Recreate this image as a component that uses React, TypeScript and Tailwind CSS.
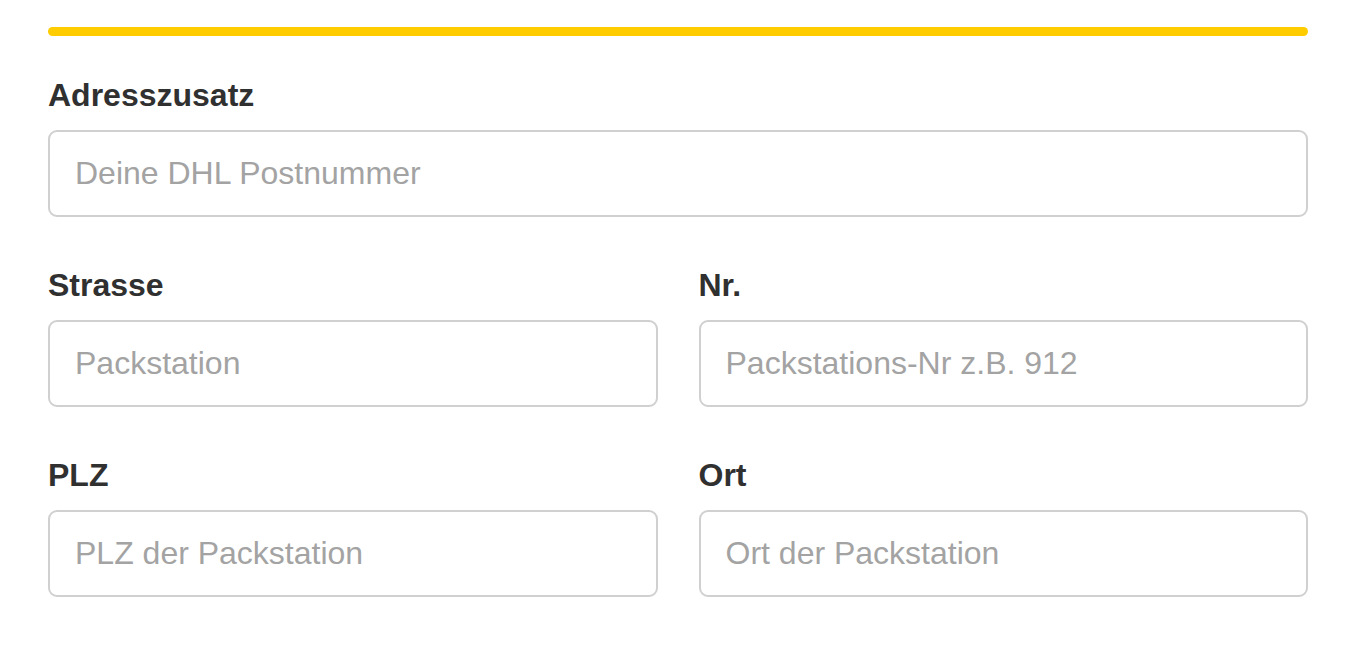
import React from "react";

const font = { fontFamily: '"Liberation Sans", Arial, sans-serif' };

function Field({ label, placeholder }: { label: string; placeholder: string }) {
  return (
    <div className="flex flex-col">
      <label className="text-[32px] leading-[37px] font-bold text-[#303030] mb-[16px]">
        {label}
      </label>
      <input
        type="text"
        placeholder={placeholder}
        className="h-[87px] w-full rounded-[9px] border-2 border-[#d0d0d0] bg-white px-[25px] text-[32px] text-[#333] placeholder:text-[#a3a3a3] outline-none"
      />
    </div>
  );
}

export default function App() {
  return (
    <div className="min-h-screen bg-white px-[48px] pt-[27px]" style={font}>
      <div className="h-[9px] w-[1260px] rounded-full bg-[#ffcc00]" />
      <div className="w-[1260px] mt-[41px] flex flex-col gap-[50px]">
        <Field label="Adresszusatz" placeholder="Deine DHL Postnummer" />
        <div className="grid grid-cols-2 gap-x-[41px]">
          <Field label="Strasse" placeholder="Packstation" />
          <Field label="Nr." placeholder="Packstations-Nr z.B. 912" />
        </div>
        <div className="grid grid-cols-2 gap-x-[41px]">
          <Field label="PLZ" placeholder="PLZ der Packstation" />
          <Field label="Ort" placeholder="Ort der Packstation" />
        </div>
      </div>
    </div>
  );
}
